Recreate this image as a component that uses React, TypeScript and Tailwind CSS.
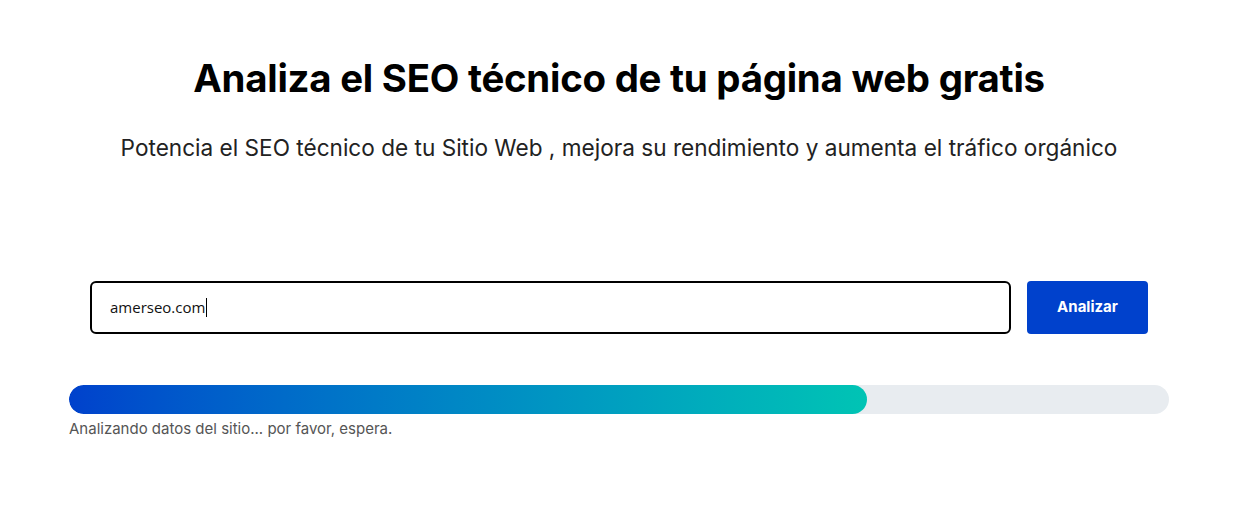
export default function App() {
  return (
    <div className="w-[1238px] bg-white min-h-[517px]" style={{ fontFamily: 'Inter, "Noto Sans", sans-serif' }}>
      <div className="flex flex-col items-center pt-[52px]">
        <h1 className="text-[38.4px] font-bold leading-[52px] text-black tracking-[-0.25px]">
          Analiza el SEO técnico de tu página web gratis
        </h1>
        <p className="mt-[28px] text-[22.6px] leading-[32px] text-[#222]">
          Potencia el SEO técnico de tu Sitio Web , mejora su rendimiento y aumenta el tráfico orgánico
        </p>
      </div>
      <div className="mx-auto mt-[117px] w-[1100px]">
        <div className="flex gap-4 px-[21px]">
          <div className="flex h-[53px] flex-1 items-center rounded-[6px] border-2 border-black px-[18px]">
            <span className="text-[15px] text-[#111]" style={{ fontFamily: '"Open Sans", "Noto Sans", sans-serif' }}>amerseo.com</span>
            <span className="ml-[1px] h-[19px] w-[1px] bg-black"></span>
          </div>
          <button className="h-[53px] w-[121px] rounded-[4px] bg-[#0041cc] text-[15px] font-bold text-white">
            Analizar
          </button>
        </div>
        <div className="mt-[51px] h-[29px] w-full overflow-hidden rounded-full bg-[#e8ecf0]">
          <div className="h-full rounded-full bg-gradient-to-r from-[#0041cc] to-[#00c4b4]" style={{ width: '72.5%' }}></div>
        </div>
        <p className="mt-[4px] text-[15px] text-[#555]">Analizando datos del sitio... por favor, espera.</p>
      </div>
    </div>
  );
}
